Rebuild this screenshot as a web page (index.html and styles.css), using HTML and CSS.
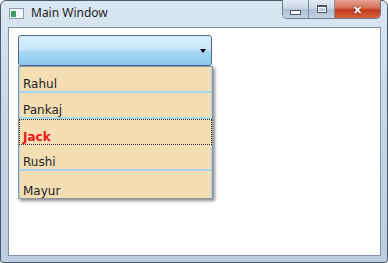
FILE: index.html
```html
<!DOCTYPE html>
<html lang="en">
<head>
    <meta charset="UTF-8">
    <meta name="viewport" content="width=device-width, initial-scale=1.0">
    <title>Main Window</title>
    <link rel="stylesheet" href="styles.css">
</head>
<body>
    <div class="window">
        <div class="titlebar">
            <div class="app-icon"><span></span></div>
            <div class="title">Main Window</div>
            <div class="caption-buttons">
                <div class="cap-btn min"><span></span></div>
                <div class="cap-btn max"><span></span></div>
                <div class="cap-btn close">&#x2715;</div>
            </div>
        </div>
        <div class="client">
            <div class="combo">
                <div class="combo-arrow"></div>
            </div>
            <ul class="popup">
                <li class="item">Rahul</li>
                <li class="item">Pankaj</li>
                <li class="item selected">Jack</li>
                <li class="item">Rushi</li>
                <li class="item">Mayur</li>
            </ul>
        </div>
    </div>
</body>
</html>
```

FILE: styles.css
```css
body {
    margin: 0;
    width: 388px;
    height: 263px;
    overflow: hidden;
}

.window {
    width: 388px;
    height: 263px;
    box-sizing: border-box;
    border: 1px solid #4d5a68;
    border-radius: 6px 6px 3px 3px;
    background: linear-gradient(to bottom, #dbe6f3 0%, #c8d8ea 40%, #bccde2 100%);
    display: flex;
    flex-direction: column;
    font-family: "Noto Sans", sans-serif;
}

.titlebar {
    height: 26px;
    display: flex;
    align-items: flex-start;
    padding-left: 8px;
}

.app-icon {
    width: 12px;
    height: 9px;
    margin-top: 7px;
    border: 1px solid #8a9cae;
    background: #f4f7fa;
    display: flex;
    align-items: center;
    padding-left: 1px;
}

.app-icon span {
    width: 5px;
    height: 6px;
    background: #3f9a6b;
}

.title {
    margin-left: 7px;
    margin-top: 3px;
    font-size: 12px;
    color: #1e1e1e;
}

.caption-buttons {
    margin-left: auto;
    margin-right: 6px;
    margin-top: -1px;
    display: flex;
    border: 1px solid #6b7b8c;
    border-top: none;
    border-radius: 0 0 5px 5px;
    overflow: hidden;
    height: 18px;
}

.cap-btn {
    width: 25px;
    display: flex;
    align-items: center;
    justify-content: center;
    background: linear-gradient(to bottom, #e3ebf5 0%, #c9d6e6 45%, #aebfd4 55%, #c4d3e5 100%);
    border-right: 1px solid #7d8d9e;
}

.cap-btn.min span {
    width: 9px;
    height: 3px;
    margin-top: 6px;
    background: #fff;
    border: 1px solid #4a5562;
}

.cap-btn.max span {
    width: 8px;
    height: 5px;
    background: transparent;
    border: 1px solid #4a5562;
    border-top-width: 2px;
    box-shadow: inset 0 0 0 1px #fff;
}

.cap-btn.close {
    width: 45px;
    border-right: none;
    background: linear-gradient(to bottom, #e8a493 0%, #d36f58 45%, #c0391d 55%, #d8613f 100%);
    color: #fff;
    font-size: 11px;
    font-weight: bold;
    text-shadow: 0 0 2px #5a1a0a;
}

.client {
    flex: 1;
    margin: 0 6px 6px 7px;
    background: #fff;
    border: 1px solid #8293a6;
    position: relative;
    padding: 7px 0 0 9px;
}

.combo {
    width: 194px;
    height: 31px;
    border: 1px solid #4f6a83;
    border-radius: 3px;
    background: linear-gradient(to bottom, #dbeffc 0%, #c5e5fa 48%, #a9d8f6 52%, #8cc8f0 100%);
    display: flex;
    align-items: center;
    justify-content: flex-end;
    padding-right: 5px;
    box-sizing: border-box;
}

.combo-arrow {
    width: 0;
    height: 0;
    border-left: 3px solid transparent;
    border-right: 3px solid transparent;
    border-top: 4px solid #000;
    margin-top: 1px;
}

.popup {
    position: absolute;
    left: 9px;
    top: 38px;
    width: 195px;
    margin: 0;
    padding: 0;
    list-style: none;
    background: #f5deb3;
    border: 1px solid #8b96a2;
    box-shadow: 2px 2px 3px rgba(0, 0, 0, 0.45);
    box-sizing: border-box;
}

.item {
    height: 26px;
    box-sizing: border-box;
    border: 1px solid #a6d6ec;
    border-top-width: 0;
    border-bottom-width: 2px;
    padding-left: 3px;
    display: flex;
    align-items: flex-end;
    font-family: "DejaVu Sans", Verdana, sans-serif;
    font-size: 12px;
    color: #222;
    line-height: 14px;
}

.item:last-child {
    border-bottom: none;
    height: 27px;
}

.item.selected {
    border: 1px dotted #333;
    color: #f01818;
    font-weight: bold;
}
```
